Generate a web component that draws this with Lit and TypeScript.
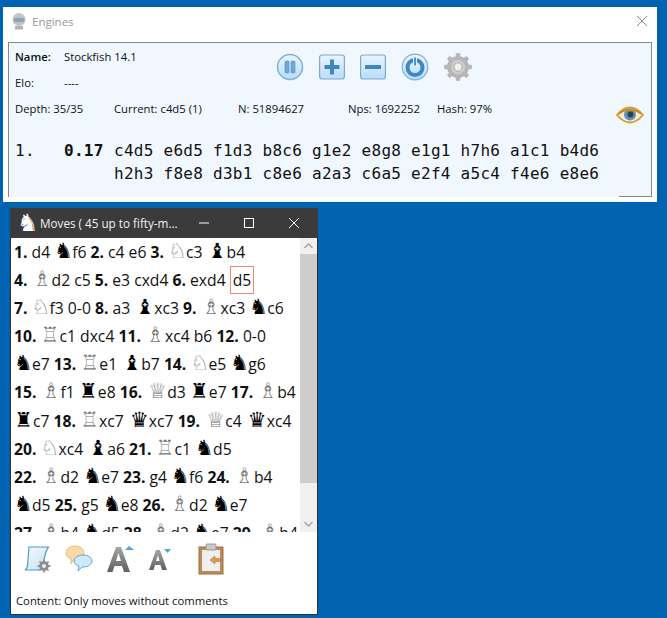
import { LitElement, html, css, svg } from "lit";
import { customElement } from "lit/decorators.js";

const PIECES: Record<string, string> = {
  N: "♘", n: "♞", B: "♗", b: "♝", R: "♖", r: "♜", Q: "♕", q: "♛",
};

const MOVES = [
  "1. d4 nf6 2. c4 e6 3. Nc3 bb4",
  "4. Bd2 c5 5. e3 cxd4 6. exd4 [d5]",
  "7. Nf3 0-0 8. a3 bxc3 9. Bxc3 nc6",
  "10. Rc1 dxc4 11. Bxc4 b6 12. 0-0",
  "ne7 13. Re1 bb7 14. Ne5 ng6",
  "15. Bf1 re8 16. Qd3 re7 17. Bb4",
  "rc7 18. Rxc7 qxc7 19. Qc4 qxc4",
  "20. Nxc4 ba6 21. Rc1 nd5",
  "22. Bd2 ne7 23. g4 nf6 24. Bb4",
  "nd5 25. g5 ne8 26. Bd2 ne7",
  "27. Bb4 nd5 28. Bd2 ne7 29. Bb4",
];

function token(t: string) {
  if (/^\d+\.$/.test(t)) return html`<b>${t}</b> `;
  if (t.startsWith("[")) return html`<span class="current">${t.slice(1, -1)}</span> `;
  const m = t.match(/^([NnBbRrQq])(x?[a-h]\d)$/);
  if (!m) return html`${t} `;
  const white = m[1] === m[1].toUpperCase();
  return html`<span class="piece ${white ? "white" : "black"} p${m[1].toLowerCase()}">${PIECES[m[1]]}</span>${m[2]} `;
}

function gearPath(cx: number, cy: number, r1: number, r2: number, teeth: number) {
  const pts: string[] = [];
  const step = (Math.PI * 2) / teeth;
  for (let i = 0; i < teeth; i++) {
    const a = i * step;
    const p = [
      [r1, a - step * 0.5],
      [r1, a - step * 0.25],
      [r2, a - step * 0.15],
      [r2, a + step * 0.15],
      [r1, a + step * 0.25],
    ];
    for (const [r, b] of p) {
      pts.push(`${(cx + r * Math.cos(b)).toFixed(2)} ${(cy + r * Math.sin(b)).toFixed(2)}`);
    }
  }
  return "M" + pts.join("L") + "Z";
}

const defs = svg`
  <defs>
    <linearGradient id="btn" x1="0" y1="0" x2="0" y2="1">
      <stop offset="0" stop-color="#eaf5fe" />
      <stop offset="1" stop-color="#b9dcf8" />
    </linearGradient>
    <linearGradient id="letter" x1="0" y1="0" x2="0" y2="1">
      <stop offset="0" stop-color="#a5a5a5" />
      <stop offset="1" stop-color="#5f5f5f" />
    </linearGradient>
    <linearGradient id="paper" x1="0" y1="0" x2="1" y2="1">
      <stop offset="0" stop-color="#f6fbff" />
      <stop offset="1" stop-color="#c4def2" />
    </linearGradient>
  </defs>
`;

@customElement("app-root")
export class AppRoot extends LitElement {
  static styles = css`
    :host {
      display: block;
      position: relative;
      width: 667px;
      height: 618px;
      overflow: hidden;
      background: #0063b1;
      font-family: "Open Sans", "Noto Sans", sans-serif;
      color: #111;
    }

    .window {
      position: absolute;
      box-sizing: border-box;
      background: #fff;
    }

    /* engines window */
    .engines {
      left: 3px;
      top: 7px;
      width: 654px;
      height: 195px;
      display: flex;
      flex-direction: column;
    }
    .engines-title {
      height: 35px;
      flex: none;
      box-sizing: border-box;
      display: flex;
      align-items: center;
      padding: 0 9px 7px 8px;
      gap: 5px;
      font-size: 11.5px;
      color: #999;
    }
    .engines-title .name {
      flex: 1;
    }
    .panel {
      flex: none;
      position: relative;
      box-sizing: border-box;
      margin-left: 5px;
      width: 644px;
      height: 155px;
      background: #f0f7ff;
      border: 1px solid #888;
      border-bottom: none;
      padding: 6px 6px 0;
      font-size: 11.3px;
      line-height: 16px;
    }
    .panel::after {
      content: "";
      position: absolute;
      right: -1px;
      bottom: 0;
      width: 33px;
      height: 1px;
      background: #888;
    }
    .top {
      display: flex;
      height: 52px;
    }
    .info {
      width: 261px;
      display: grid;
      grid-template-columns: 49px 1fr;
      grid-auto-rows: 26px;
    }
    .info .label-strong {
      font-weight: 600;
    }
    .buttons {
      display: flex;
      gap: 15px;
      padding-top: 4px;
      align-items: flex-start;
    }
    .buttons svg {
      display: block;
    }
    .stats {
      display: flex;
      height: 16px;
    }
    .stats span:nth-child(1) { width: 99px; }
    .stats span:nth-child(2) { width: 124px; }
    .stats span:nth-child(3) { width: 110px; }
    .stats span:nth-child(4) { width: 89px; }
    .eye {
      position: absolute;
      right: 7px;
      top: 63px;
    }
    .pv {
      display: grid;
      grid-template-columns: 49px 50px 1fr;
      margin-top: 23px;
      font-family: "DejaVu Sans Mono", "Liberation Mono", monospace;
      font-size: 16px;
      line-height: 22.5px;
      letter-spacing: 0.27px;
      white-space: pre;
      color: #111;
    }
    .pv b {
      font-weight: 700;
    }

    /* moves window */
    .moves {
      left: 10px;
      top: 208px;
      width: 308px;
      height: 407px;
      border: 1px solid #2f2f2f;
      border-top: none;
      display: flex;
      flex-direction: column;
    }
    .moves-title {
      flex: none;
      height: 30px;
      margin: 0 -1px;
      background: #3b3b3b;
      color: #f2f2f2;
      display: flex;
      align-items: center;
      padding-left: 8px;
      font-size: 11.7px;
    }
    .moves-title .knight {
      flex: none;
      margin-left: -1px;
      font-family: "DejaVu Sans", sans-serif;
      font-size: 24px;
      line-height: 20px;
      color: #fff;
      width: 23px;
    }
    .moves-title .name {
      flex: none;
      width: 157px;
      white-space: nowrap;
    }
    .controls {
      flex: none;
      display: flex;
      gap: 35px;
      margin-left: 2px;
    }
    .controls svg {
      display: block;
    }
    .list-wrap {
      flex: none;
      height: 294px;
      display: flex;
    }
    .list {
      flex: 1;
      overflow: hidden;
      padding: 0 0 0 3px;
      font-size: 15.7px;
      line-height: 28.1px;
      white-space: nowrap;
      color: #111;
    }
    .list b {
      font-weight: 700;
    }
    .piece {
      display: inline-block;
      text-align: right;
      font-family: "DejaVu Sans", sans-serif;
      font-size: 21px;
      line-height: 20px;
    }
    .pn { width: 18px; }
    .pb { width: 20px; }
    .pr { width: 19px; }
    .pq { width: 21px; }
    .piece.white {
      color: #777;
    }
    .piece.black {
      color: #000;
    }
    .current {
      display: inline-block;
      box-sizing: border-box;
      height: 28px;
      line-height: 26px;
      border: 1px solid #f0857a;
      padding: 0 2px;
      vertical-align: top;
    }
    .scrollbar {
      flex: none;
      width: 17px;
      background: #f0f0f0;
      display: flex;
      flex-direction: column;
    }
    .scrollbar .arrow {
      flex: none;
      height: 16px;
      display: flex;
      align-items: center;
      justify-content: center;
    }
    .scrollbar .thumb {
      flex: none;
      height: 229px;
      background: #cdcdcd;
    }
    .scrollbar .rest {
      flex: 1;
    }
    .toolbar {
      flex: none;
      box-sizing: border-box;
      display: flex;
      align-items: center;
      height: 46px;
      padding: 8px 0 0 12px;
      gap: 14px;
    }
    .toolbar svg {
      display: block;
    }
    .toolbar .clip {
      margin-left: 12px;
    }
    .status {
      padding: 15px 5px 0;
      font-size: 11.3px;
      line-height: 16px;
      color: #111;
    }
  `;

  renderEngines() {
    return html`
      <div class="window engines">
        <div class="engines-title">
          <svg width="16" height="18" viewBox="0 0 16 18">
            <circle cx="8" cy="7.5" r="6.5" fill="#c4c4c4" />
            <rect x="2.5" y="6" width="11" height="4" rx="2" fill="#8fa3b5" />
            <rect x="4" y="14" width="8" height="3.5" fill="#b5b5b5" />
          </svg>
          <span class="name">Engines</span>
          <svg width="12" height="12" viewBox="0 0 12 12">
            <path d="M1 1l10 10M11 1L1 11" stroke="#8a8a8a" stroke-width="1" fill="none" />
          </svg>
        </div>
        <div class="panel">
          <div class="top">
            <div class="info">
              <span class="label-strong">Name:</span><span>Stockfish 14.1</span>
              <span>Elo:</span><span>----</span>
            </div>
            <div class="buttons">
              <svg width="28" height="28" viewBox="0 0 28 28">
                ${defs}
                <circle cx="14" cy="14" r="12.5" fill="url(#btn)" stroke="#7fb0d8" stroke-width="1.5" />
                <rect x="9" y="8" width="4" height="12" rx="1" fill="#6fa9d8" stroke="#4c8cc0" stroke-width=".6" />
                <rect x="15" y="8" width="4" height="12" rx="1" fill="#6fa9d8" stroke="#4c8cc0" stroke-width=".6" />
              </svg>
              <svg width="26" height="28" viewBox="0 0 26 28">
                <rect x=".6" y="2" width="24.800" height="24" rx="2.500" fill="url(#btn)" stroke="#7fa9cc" stroke-width="1.200" />
                <path d="M13 6.500v15M5.500 14h15" stroke="#3f87bd" stroke-width="4" fill="none" />
              </svg>
              <svg width="26" height="28" viewBox="0 0 26 28">
                <rect x=".6" y="2" width="24.800" height="24" rx="2.500" fill="url(#btn)" stroke="#7fa9cc" stroke-width="1.200" />
                <path d="M5 14h16" stroke="#3f87bd" stroke-width="4" fill="none" />
              </svg>
              <svg width="28" height="28" viewBox="0 0 28 28">
                <circle cx="14" cy="14" r="12.8" fill="url(#btn)" stroke="#7fb0d8" stroke-width="1.200" />
                <circle cx="14" cy="14.500" r="7.500" fill="none" stroke="#3f87c4" stroke-width="4" />
                <path d="M14 4v9" stroke="#e4f2fd" stroke-width="4" />
                <path d="M14 4.500v8" stroke="#3f87c4" stroke-width="1.800" />
              </svg>
              <svg width="28" height="28" viewBox="0 0 28 28">
                <path d="${gearPath(14, 14, 10.5, 13.5, 8)}" fill="#b7b7b7" stroke="#a4a4a4" stroke-width=".6" />
                <circle cx="14" cy="14" r="7" fill="#cfcfcf" />
                <circle cx="14" cy="14" r="4.200" fill="#f0f0f0" stroke="#a8a8a8" />
              </svg>
            </div>
          </div>
          <div class="stats">
            <span>Depth: 35/35</span>
            <span>Current: c4d5 (1)</span>
            <span>N: 51894627</span>
            <span>Nps: 1692252</span>
            <span>Hash: 97%</span>
          </div>
          <svg class="eye" width="28" height="18" viewBox="0 0 28 18">
            <path d="M1 9C6 3 10 1.500 14 1.500S22 3 27 9c-5 6-9 7.500-13 7.500S6 15 1 9z" fill="#f6efe0" stroke="#d9992b" stroke-width="1.800" />
            <circle cx="14" cy="8.500" r="6" fill="#5d93b8" />
            <circle cx="14.500" cy="8.500" r="3" fill="#33414d" />
            <path d="M3 8C8 2.500 20 2.500 25 8" stroke="#c98a1c" stroke-width="1.600" fill="none" />
          </svg>
          <div class="pv">
            <span>1.</span><b>0.17</b>
            <span>c4d5 e6d5 f1d3 b8c6 g1e2 e8g8 e1g1 h7h6 a1c1 b4d6
h2h3 f8e8 d3b1 c8e6 a2a3 c6a5 e2f4 a5c4 f4e6 e8e6</span>
          </div>
        </div>
      </div>
    `;
  }

  renderToolbar() {
    return html`
      <div class="toolbar">
        <svg width="28" height="28" viewBox="0 0 28 28">
          ${defs}
          <path d="M6 2h20c-2 1-2 3-3 5l-4 15c-.5 2-2 3-4 3H2c2-1 2-2 2.500-4L6 2z" fill="url(#paper)" stroke="#4f9bcb" stroke-width="1.200" />
          <path d="${gearPath(21, 21, 4.8, 6.5, 8)}" fill="#8a8f94" />
          <circle cx="21" cy="21" r="2" fill="#eee" />
        </svg>
        <svg width="28" height="28" viewBox="0 0 28 28">
          <path d="M10 1c5 0 9 3 9 7s-4 7-9 7H8l-2 4v-5C3 13 1 11 1 8c0-4 4-7 9-7z" fill="#fbd9a4" stroke="#eebc7e" />
          <path d="M18 10c5 0 9 2.500 9 6s-4 6-9 6h-1l-4 4 1-4.600C11 20 9 18.500 9 16c0-3.500 4-6 9-6z" fill="#cfe8fa" stroke="#5fa6d6" />
        </svg>
        <svg width="28" height="30" viewBox="0 0 28 30">
          <path d="M0 28L9 3h5l9 25h-6l-2-6H7.500l-2 6zM9 17h5l-2.500-8z" fill="url(#letter)" fill-rule="evenodd" />
          <path d="M18 6l4-4 5 4z" fill="#53a4dc" />
        </svg>
        <svg width="23" height="24" viewBox="0 0 23 24">
          <path d="M0 23L7 3h4l7 20h-5l-1.500-5H6l-1.500 5zM7 14h3.500L9 8z" fill="url(#letter)" fill-rule="evenodd" />
          <path d="M15 2h7l-3.500 4z" fill="#53a4dc" />
        </svg>
        <svg class="clip" width="26" height="32" viewBox="0 0 26 32">
          <rect x="1" y="4" width="24" height="27" fill="#b98a5a" stroke="#9c7040" />
          <rect x="4" y="7" width="18" height="21" fill="#f0f0f0" />
          <rect x="8" y="1" width="10" height="6" rx="1" fill="#c8c8c8" stroke="#999" />
          <path d="M12 17l5-4v2.500h5v3h-5V21z" fill="#dd9d55" stroke="#b27a3b" stroke-width=".6" />
        </svg>
      </div>
    `;
  }

  renderMoves() {
    return html`
      <div class="window moves">
        <div class="moves-title">
          <span class="knight">♞</span>
          <span class="name">Moves ( 45 up to fifty-m...</span>
          <div class="controls">
            <svg width="10" height="10" viewBox="0 0 10 10"><path d="M0 5h10" stroke="#fff" /></svg>
            <svg width="10" height="10" viewBox="0 0 10 10"><rect x=".5" y=".5" width="9" height="9" fill="none" stroke="#fff" /></svg>
            <svg width="10" height="10" viewBox="0 0 10 10"><path d="M0 0l10 10M10 0L0 10" stroke="#fff" /></svg>
          </div>
        </div>
        <div class="list-wrap">
          <div class="list">
            ${MOVES.map((line) => html`<div>${line.split(" ").map(token)}</div>`)}
          </div>
          <div class="scrollbar">
            <div class="arrow">
              <svg width="9" height="6" viewBox="0 0 9 6"><path d="M.5 5l4-4 4 4" stroke="#a3a3a3" fill="none" stroke-width="1.300" /></svg>
            </div>
            <div class="thumb"></div>
            <div class="rest"></div>
            <div class="arrow">
              <svg width="9" height="6" viewBox="0 0 9 6"><path d="M.5 1l4 4 4-4" stroke="#a3a3a3" fill="none" stroke-width="1.300" /></svg>
            </div>
          </div>
        </div>
        ${this.renderToolbar()}
        <div class="status">Content: Only moves without comments</div>
      </div>
    `;
  }

  render() {
    return html`${this.renderEngines()}${this.renderMoves()}`;
  }
}
